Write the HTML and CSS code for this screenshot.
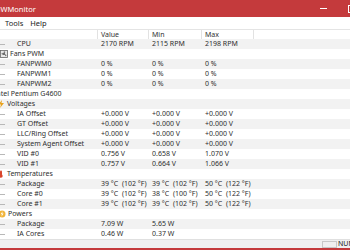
FILE: index.html
```html
<!DOCTYPE html>
<html>
<head>
<meta charset="utf-8">
<link rel="stylesheet" href="styles.css">
</head>
<body>
<div class="window">
  <div class="titlebar">
    <span class="title">HWMonitor</span>
    <span class="controls"><span class="min"></span><span class="max"></span></span>
  </div>
  <div class="menubar"><span>Tools</span><span>Help</span></div>
  <div class="list">
    <div class="row header"><div class="cell"></div><div class="cell">Value</div><div class="cell">Min</div><div class="cell">Max</div><div class="cell last"></div></div>

    <div class="row shade"><div class="name leaf"><span class="branch"></span>CPU</div><div class="cell">2170 RPM</div><div class="cell">2115 RPM</div><div class="cell">2198 RPM</div><div></div></div>
    <div class="row"><div class="name cat fans"><svg class="icon" viewBox="0 0 8 8"><rect x="0.5" y="0.5" width="7" height="7" fill="#e8e8e8" stroke="#666" stroke-width="0.8"/><circle cx="4" cy="4" r="1" fill="#444"/><path d="M4 3 C3 1.5 4.5 1 5.5 2 Z M5 4.5 C6.5 4 6.8 5.8 5.6 6.3 Z M3 4.5 C1.6 5 1.2 3.4 2.3 2.8 Z" fill="#444"/></svg>Fans PWM</div><div></div><div></div><div></div><div></div></div>
    <div class="row shade"><div class="name leaf"><span class="branch"></span>FANPWM0</div><div class="cell">0 %</div><div class="cell">0 %</div><div class="cell">0 %</div><div></div></div>
    <div class="row"><div class="name leaf"><span class="branch"></span>FANPWM1</div><div class="cell">0 %</div><div class="cell">0 %</div><div class="cell">0 %</div><div></div></div>
    <div class="row shade"><div class="name leaf"><span class="branch"></span>FANPWM2</div><div class="cell">0 %</div><div class="cell">0 %</div><div class="cell">0 %</div><div></div></div>
    <div class="row"><div class="name device">Intel Pentium G4600</div><div></div><div></div><div></div><div></div></div>
    <div class="row shade"><div class="name cat sub"><svg class="icon" viewBox="0 0 8 8"><path d="M5 0 L1.5 4.5 H4 L3 8 L7 3 H4.5 Z" fill="#e9a21c"/></svg>Voltages</div><div></div><div></div><div></div><div></div></div>
    <div class="row"><div class="name leaf"><span class="branch"></span>IA Offset</div><div class="cell">+0.000 V</div><div class="cell">+0.000 V</div><div class="cell">+0.000 V</div><div></div></div>
    <div class="row shade"><div class="name leaf"><span class="branch"></span>GT Offset</div><div class="cell">+0.000 V</div><div class="cell">+0.000 V</div><div class="cell">+0.000 V</div><div></div></div>
    <div class="row"><div class="name leaf"><span class="branch"></span>LLC/Ring Offset</div><div class="cell">+0.000 V</div><div class="cell">+0.000 V</div><div class="cell">+0.000 V</div><div></div></div>
    <div class="row shade"><div class="name leaf"><span class="branch"></span>System Agent Offset</div><div class="cell">+0.000 V</div><div class="cell">+0.000 V</div><div class="cell">+0.000 V</div><div></div></div>
    <div class="row"><div class="name leaf"><span class="branch"></span>VID #0</div><div class="cell">0.756 V</div><div class="cell">0.658 V</div><div class="cell">1.070 V</div><div></div></div>
    <div class="row shade"><div class="name leaf"><span class="branch"></span>VID #1</div><div class="cell">0.757 V</div><div class="cell">0.664 V</div><div class="cell">1.066 V</div><div></div></div>
    <div class="row"><div class="name cat sub"><svg class="icon" viewBox="0 0 8 8"><rect x="3" y="0.5" width="2" height="5" rx="1" fill="#d9452b"/><circle cx="4" cy="6" r="1.7" fill="#d9452b"/></svg>Temperatures</div><div></div><div></div><div></div><div></div></div>
    <div class="row shade"><div class="name leaf"><span class="branch"></span>Package</div><div class="cell">39 °C&nbsp; (102 °F)</div><div class="cell">39 °C&nbsp; (102 °F)</div><div class="cell">50 °C&nbsp; (122 °F)</div><div></div></div>
    <div class="row"><div class="name leaf"><span class="branch"></span>Core #0</div><div class="cell">39 °C&nbsp; (102 °F)</div><div class="cell">38 °C&nbsp; (100 °F)</div><div class="cell">50 °C&nbsp; (122 °F)</div><div></div></div>
    <div class="row shade"><div class="name leaf"><span class="branch"></span>Core #1</div><div class="cell">39 °C&nbsp; (102 °F)</div><div class="cell">39 °C&nbsp; (102 °F)</div><div class="cell">50 °C&nbsp; (122 °F)</div><div></div></div>
    <div class="row"><div class="name cat sub pw"><svg class="icon" viewBox="0 0 8 8"><circle cx="4" cy="4" r="3.5" fill="#f0b43a"/><path d="M4.6 1.2 L2.6 4.3 H4 L3.4 6.8 L5.6 3.6 H4.2 Z" fill="#fff"/></svg>Powers</div><div></div><div></div><div></div><div></div></div>
    <div class="row shade"><div class="name leaf"><span class="branch"></span>Package</div><div class="cell">7.09 W</div><div class="cell">5.65 W</div><div class="cell"></div><div></div></div>
    <div class="row"><div class="name leaf"><span class="branch"></span>IA Cores</div><div class="cell">0.46 W</div><div class="cell">0.37 W</div><div class="cell"></div><div></div></div>
  </div>
  <div class="statusbar"><span class="panel"></span><span class="num">NUM</span></div>
</div>
</body>
</html>
```

FILE: styles.css
```css
html, body {
  margin: 0;
  padding: 0;
}
body {
  width: 350px;
  height: 250px;
  overflow: hidden;
  background: #fff;
  font-family: "Noto Sans", "Open Sans", sans-serif;
  font-size: 7px;
  color: #2e2e2e;
}
.window {
  height: 250px;
  display: flex;
  flex-direction: column;
  box-sizing: border-box;
  border-bottom: 2px solid #c43a3c;
  overflow: hidden;
}
.titlebar {
  flex: none;
  height: 17px;
  background: #c43a3c;
  color: #fff;
  display: flex;
  align-items: center;
  justify-content: space-between;
}
.title {
  margin-left: -5px;
  font-size: 7.5px;
}
.controls {
  display: flex;
  align-items: center;
  gap: 21px;
  margin-right: -6px;
}
.min {
  width: 7px;
  height: 1px;
  background: #fff;
}
.max {
  width: 6px;
  height: 6px;
  border: 1px solid #fff;
}
.menubar {
  flex: none;
  height: 12px;
  display: flex;
  align-items: center;
  gap: 7px;
  padding-left: 5px;
  font-size: 7.5px;
  color: #222;
  background: #fff;
}
.list {
  flex: 1;
  display: flex;
  flex-direction: column;
  overflow: hidden;
}
.row {
  display: grid;
  grid-template-columns: 98px 51px 53px 52px 1fr;
  height: 10px;
  line-height: 10px;
  white-space: nowrap;
  flex: none;
}
.row.shade {
  background: #f2f2f2;
}
.header {
  background: #fff;
  border-top: 1px solid #e4e4e4;
  box-sizing: border-box;
  color: #333;
}
.header .cell {
  border-right: 1px solid #e2e2e2;
}
.header .cell.last {
  border-right: none;
}
.cell {
  padding-left: 3px;
  overflow: hidden;
}
.name {
  display: flex;
  align-items: center;
  overflow: hidden;
}
.branch {
  flex: none;
  width: 5px;
  height: 1px;
  background: #b8b8b8;
  margin-right: 12px;
}
.icon {
  flex: none;
  width: 8px;
  height: 8px;
  margin-right: 2px;
}
.cat.sub .icon {
  margin-left: -3px;
}
.cat.pw .icon {
  margin-left: -2px;
}
.device {
  margin-left: -6px;
}
.statusbar {
  flex: none;
  height: 9px;
  background: #f0f0f0;
  border-top: 1px solid #e0e0e0;
  box-sizing: border-box;
  display: flex;
  align-items: center;
  justify-content: flex-end;
  gap: 1px;
  font-size: 7px;
  line-height: 8px;
  color: #222;
}
.panel {
  width: 15px;
  height: 7px;
  border: 1px solid #c8c8c8;
  box-sizing: border-box;
}
.num {
  width: 12px;
  overflow: hidden;
}
```
